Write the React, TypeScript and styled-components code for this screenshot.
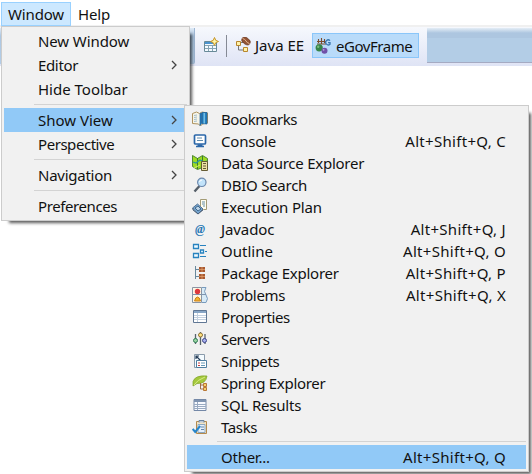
import React from "react";
import styled, { createGlobalStyle } from "styled-components";

const Global = createGlobalStyle`
  * { box-sizing: border-box; }
  body { margin: 0; background: #fff; overflow: hidden; }
`;

const Page = styled.div`
  position: relative;
  width: 532px;
  height: 474px;
  overflow: hidden;
  background: #fff;
  color: #111;
  font: 15px/22px "Noto Sans", "Open Sans", sans-serif;
  white-space: nowrap;
`;

const MenuBar = styled.nav`
  display: flex;
  height: 25px;
  padding: 2px 0 0 1px;
`;

const MenuBarItem = styled.div<{ $active?: boolean }>`
  height: 24px;
  padding: 0 6px;
  line-height: 23px;
  letter-spacing: -0.15px;
  border: 1px solid ${(p) => (p.$active ? "#99d1ff" : "transparent")};
  background: ${(p) => (p.$active ? "#cce8ff" : "transparent")};
`;

const Toolbar = styled.div`
  display: flex;
  height: 41px;
  border-top: 2px solid #f0f0f0;
  background: linear-gradient(#f6f8fd, #dfe4f5);
`;

const ToolbarEdge = styled.div`
  width: 195px;
  height: 36px;
  margin-top: 1px;
  border-right: 1px solid #9db6d3;
  border-radius: 0 0 2px 0;
  background: linear-gradient(#e0ebf6, #adc7e2 8px, #b3cde7);
`;

const Perspectives = styled.div`
  display: flex;
  align-items: center;
  width: 232px;
  height: 36px;
  padding-left: 8px;
`;

const Divider = styled.div`
  width: 1px;
  height: 22px;
  margin: 1px 8px 0 7px;
  background: #858a95;
`;

const PerspectiveButton = styled.div<{ $active?: boolean }>`
  display: flex;
  align-items: center;
  gap: ${(p) => (p.$active ? 5 : 4)}px;
  flex: none;
  width: ${(p) => (p.$active ? 107 : 77)}px;
  height: 25px;
  padding-top: ${(p) => (p.$active ? 2 : 0)}px;
  padding-left: ${(p) => (p.$active ? 2 : 0)}px;
  border: ${(p) => (p.$active ? "1px solid #8ac6fa" : "0")};
  background: ${(p) => (p.$active ? "#b9dbfa" : "transparent")};
`;

const ToolbarRest = styled.div`
  flex: 1;
  height: 35px;
  margin-top: 1px;
  border-bottom: 1px solid #a5aac2;
  background: linear-gradient(#e4edf6, #adc6e0 5px, #adc6e0 10px, #b3cde6 10px);
`;

const Menu = styled.div<{ $x: number; $y: number; $w: number }>`
  position: absolute;
  left: ${(p) => p.$x}px;
  top: ${(p) => p.$y}px;
  width: ${(p) => p.$w}px;
  padding: 2px;
  border: 1px solid #ccc;
  background: #f1f1f1;
  box-shadow: 5px 5px 3px -3px rgba(0, 0, 0, 0.65);
`;

const MenuRow = styled.div<{ $height?: number; $active?: boolean }>`
  display: flex;
  align-items: center;
  height: ${(p) => p.$height ?? 24}px;
  background: ${(p) => (p.$active ? "#91c9f7" : "transparent")};
`;

const IconCell = styled.div`
  display: flex;
  flex: none;
  width: 34px;
  padding-left: 5px;
`;

const Label = styled.span<{ $track?: number }>`
  flex: 1;
  letter-spacing: ${(p) => p.$track ?? 0}px;
`;

const Shortcut = styled.span`
  padding-right: 20px;
  letter-spacing: 0.3px;
`;

const Separator = styled.hr`
  height: 1px;
  margin: 3px 0 3px 30px;
  border: 0;
  background: #d3d3d3;
`;

const Glyph = styled.svg`
  display: block;
  flex: none;
  width: 16px;
  height: 16px;
`;

const Arrow = styled.svg`
  width: 6px;
  height: 10px;
  margin-right: 10px;
`;

const art = {
  newPerspective: (
    <>
      <path d="M1.5 4.5h12v10h-12z" fill="#f4faff" stroke="#688a98" />
      <path d="M2 5h8v2H2z" fill="#4a93d0" />
      <path d="M2 8.5h11M5.5 8v6M2 11.5h11M9.5 8v6" stroke="#86a4b5" />
      <path d="M11.5.5l1.2 2.8 2.8 1.2-2.8 1.2-1.2 2.8-1.2-2.8-2.8-1.2 2.8-1.2z" fill="#fff6a7" stroke="#c69424" />
    </>
  ),
  javaee: (
    <>
      <path d="M3.5 8v5h5M6 5.5h3" fill="none" stroke="#777" />
      <path d="M1.5 4.5h4v4h-4zM8.500 10.500h4v4h-4z" fill="#fff1a7" stroke="#b8862d" />
      <ellipse cx="11" cy="4" rx="4.700" ry="3.200" transform="rotate(35 11 4)" fill="#925334" stroke="#61301c" strokeWidth=".6" />
      <path d="M7.500 1.500q2.500.5 3.500 2.500t3.500 2.500" fill="none" stroke="#e7b893" />
    </>
  ),
  egov: (
    <>
      <path d="M2 3.500h9M3.500 1v4M6.500 0v6M9.500 1v4M2 6h9" fill="none" stroke="#7b4c2b" strokeWidth="1.100" />
      <circle cx="4.200" cy="9.800" r="3.600" fill="#368449" />
      <circle cx="3.200" cy="8.800" r="1.200" fill="#78bd7d" />
      <circle cx="9.500" cy="12.800" r="3" fill="#7050a8" />
      <circle cx="8.600" cy="11.800" r=".9" fill="#b8a7dc" />
      <path d="M15 2.600a2.500 2.500 0 1 0 0 3.600V4.700h-2" fill="none" stroke="#3976ae" strokeWidth="1.300" />
    </>
  ),
  bookmarks: (
    <>
      <path d="M.5 2.500l4-1.500 3 1.500L10 1l5.500 1v10l-5 1-2 2-2-2-6-.5z" fill="#f7f5e8" stroke="#ad925f" />
      <path d="M2 4.500l3-.5M2 6.500l3-.5M2 8.500l3-.5M2 10.500l3-.5" stroke="#8caec5" strokeWidth=".8" />
      <path d="M8 2.500v12l1.500-2V2zM10 1.500v11l5 .5V1.500z" fill="#2680bf" stroke="#175d98" strokeWidth=".7" />
      <path d="M11.500 2v10.500H13V2z" fill="#71bde5" />
    </>
  ),
  console: (
    <>
      <rect x="2.500" y="2" width="11" height="9" rx="1" fill="#fff" stroke="#2b67a9" strokeWidth="1.700" />
      <path d="M5 5h5M5 7.500h6" stroke="#618cac" />
      <path d="M5.500 12h5M4 13.500h8" stroke="#2b67a9" strokeWidth="1.500" />
    </>
  ),
  data: (
    <>
      <path d="M.5.500l5 3 5-3 5 3v11l-5-2-5 2-5-3z" fill="#9edb22" stroke="#4f8834" />
      <path d="M5.500 3v11M10.500 1v11" stroke="#397834" />
      <path d="M1 7l3 1 4-3 4 2 3-1" fill="none" stroke="#2694a1" strokeWidth="1.300" />
      <path d="M8 10l-6 3" stroke="#d5ef74" />
      <path d="M9.500 6.500h6v9h-6z" fill="#eee1a4" stroke="#665c35" />
      <path d="M11 8.500h3M11 11h3M11 13.500h3" stroke="#665c35" />
    </>
  ),
  search: (
    <>
      <path d="M7.500 9l-5 5.500" stroke="#565f69" strokeWidth="2.400" />
      <circle cx="9.800" cy="5.300" r="4.200" fill="#c2e3fa" stroke="#6b88ad" strokeWidth="1.200" />
      <path d="M7.500 5q.5-2 2.500-2" fill="none" stroke="#fff" />
    </>
  ),
  plan: (
    <>
      <path d="M8.500.500h6v10h-3l-3-3z" fill="#fffef0" stroke="#a39b75" />
      <path d="M10 3h3M10 5h3M11 7h2" stroke="#638da7" />
      <path d="M.5 9l5-4 5.500 5-5 5z" fill="#77a7d3" stroke="#55728f" />
      <path d="M3 9l3-2 3 3-3 2z" fill="#bad3e7" stroke="#41688c" />
      <path d="M1 9v2l5 4 5-4" fill="none" stroke="#4d6179" />
    </>
  ),
  javadoc: (
    <text x="8" y="11.500" textAnchor="middle" fontFamily="Liberation Serif" fontSize="12" fontWeight="700" fontStyle="italic" fill="#2878b5">@</text>
  ),
  outline: (
    <>
      <path d="M1.500 1.500h5v4h-5zM1.500 10.500h5v4h-5zM8.500 7h3v3h-3z" fill="#effaff" stroke="#2782bf" strokeWidth="1.300" />
      <path d="M8 2.500h6M13 8.500h2M8 13.500h6" stroke="#2782bf" />
    </>
  ),
  pkg: (
    <>
      <path d="M3.500 1v13M4 4.500h3M4 11.500h3" fill="none" stroke="#68889c" />
      <path d="M7 2h6v5H7zM7 9h6v5H7z" fill="#a85a32" />
      <path d="M7 4.500h6M10 2v5M7 11.500h6M10 9v5" stroke="#e7a36f" strokeWidth=".7" />
    </>
  ),
  problems: (
    <>
      <path d="M.5.500h9v15h-9z" fill="#fff6e2" stroke="#8994a3" />
      <path d="M10 .5h4q-3 4 0 7.500t0 7.500h-4" fill="#d8ebf7" stroke="#789bbd" />
      <path d="M1 7.500h13" stroke="#8094ac" />
      <circle cx="5.500" cy="4.500" r="2.700" fill="#df383b" />
      <path d="M2.500 14q1-4 3-4t3 4z" fill="#f4b42d" stroke="#ca801d" />
    </>
  ),
  properties: (
    <>
      <path d="M1.500 1.500h13v12h-13z" fill="#fff" stroke="#607794" />
      <path d="M2 2h12v2H2z" fill="#88a6c6" />
      <path d="M2 6.500h12M2 8.500h12M2 10.500h12M5.500 4v9" stroke="#c3d0df" />
    </>
  ),
  servers: (
    <>
      <path d="M3.500 3v10M8.500 1v13M13 3v10" stroke="#58646c" strokeWidth="1.300" />
      <circle cx="3.500" cy="9.500" r="2" fill="#9ad5a3" stroke="#307c53" />
      <circle cx="8.500" cy="4" r="2" fill="#ffe482" stroke="#927332" />
      <circle cx="12.500" cy="9.500" r="2" fill="#a8b1ef" stroke="#40478b" />
    </>
  ),
  snippets: (
    <>
      <path d="M2.500 1.500h10v13h-10z" fill="#f4fbff" stroke="#8a9bab" />
      <path d="M4 6V3h3M4.500 3.500l4 4" fill="none" stroke="#263d57" strokeWidth="1.200" />
      <path d="M4.500 7.500h10v7h-10z" fill="#fff" stroke="#4f7fa1" />
      <path d="M6 10h2M6 12.500h2" stroke="#c53d43" />
      <path d="M9 10h4M9 12.500h4" stroke="#6599b7" />
    </>
  ),
  spring: (
    <>
      <path d="M1 6.500Q3 0 15 1q-1 8-10 7.500L1 11z" fill="#a4c83c" stroke="#7da126" strokeWidth=".7" />
      <path d="M2 10Q5 5 13 2" fill="none" stroke="#d7eb86" />
      <path d="M8.500 8v6H11M8.500 10H11" fill="none" stroke="#a06d46" />
      <path d="M11.500 8.500h3v3h-3zM11.500 12.500h3v3h-3z" fill="#f6d16a" stroke="#b97736" />
    </>
  ),
  sql: (
    <>
      <path d="M2 2.500h12v11H2z" fill="#f8faff" stroke="#7488a7" />
      <path d="M2 3h12v2H2z" fill="#7f94b1" />
      <path d="M2 7.500h12M2 9.500h12M2 11.500h12M5.500 5v8" stroke="#9aabc2" />
    </>
  ),
  tasks: (
    <>
      <path d="M4.500 2.500h10v12h-10z" fill="#f2e4c5" stroke="#b58a4c" />
      <path d="M7 3.500V1.500h5v2" fill="#bbc9d8" stroke="#6a829d" />
      <path d="M6 5.500h7v8H6z" fill="#e4effc" stroke="#8da7be" />
      <path d="M9 8h3M9 10.500h3" stroke="#6587a8" />
      <path d="M.7 10l2.500 3 5-6" fill="none" stroke="#2686cb" strokeWidth="2" />
    </>
  ),
};

type IconName = keyof typeof art;

const Icon = ({ name }: { name: IconName }) => (
  <Glyph viewBox="0 0 16 16">{art[name]}</Glyph>
);

type Entry = { label: string; track?: number; arrow?: boolean; active?: boolean };

const windowMenu: Entry[][] = [
  [
    { label: "New Window", track: -0.1 },
    { label: "Editor", track: -0.35, arrow: true },
    { label: "Hide Toolbar" },
  ],
  [
    { label: "Show View", arrow: true, active: true },
    { label: "Perspective", track: -0.45, arrow: true },
  ],
  [{ label: "Navigation", track: -0.25, arrow: true }],
  [{ label: "Preferences", track: -0.4 }],
];

type View = { icon: IconName; label: string; track?: number; keys?: string };

const views: View[] = [
  { icon: "bookmarks", label: "Bookmarks", track: -0.4 },
  { icon: "console", label: "Console", track: -0.2, keys: "Alt+Shift+Q, C" },
  { icon: "data", label: "Data Source Explorer", track: -0.25 },
  { icon: "search", label: "DBIO Search", track: -0.25 },
  { icon: "plan", label: "Execution Plan", track: -0.15 },
  { icon: "javadoc", label: "Javadoc", track: -0.1, keys: "Alt+Shift+Q, J" },
  { icon: "outline", label: "Outline", keys: "Alt+Shift+Q, O" },
  { icon: "pkg", label: "Package Explorer", track: -0.25, keys: "Alt+Shift+Q, P" },
  { icon: "problems", label: "Problems", track: -0.35, keys: "Alt+Shift+Q, X" },
  { icon: "properties", label: "Properties", track: -0.4 },
  { icon: "servers", label: "Servers", track: -0.55 },
  { icon: "snippets", label: "Snippets", track: -0.3 },
  { icon: "spring", label: "Spring Explorer", track: -0.3 },
  { icon: "sql", label: "SQL Results", track: -0.2 },
  { icon: "tasks", label: "Tasks", track: -0.35 },
];

export default function App() {
  return (
    <Page>
      <Global />
      <MenuBar>
        <MenuBarItem $active>Window</MenuBarItem>
        <MenuBarItem>Help</MenuBarItem>
      </MenuBar>
      <Toolbar>
        <ToolbarEdge />
        <Perspectives>
          <Icon name="newPerspective" />
          <Divider />
          <PerspectiveButton>
            <Icon name="javaee" />
            <Label>Java EE</Label>
          </PerspectiveButton>
          <PerspectiveButton $active>
            <Icon name="egov" />
            <Label $track={-0.45}>eGovFrame</Label>
          </PerspectiveButton>
        </Perspectives>
        <ToolbarRest />
      </Toolbar>
      <Menu $x={1} $y={26} $w={189}>
        {windowMenu.map((group, i) => (
          <React.Fragment key={i}>
            {i > 0 && <Separator />}
            {group.map((item) => (
              <MenuRow key={item.label} $active={item.active}>
                <IconCell />
                <Label $track={item.track}>{item.label}</Label>
                {item.arrow && (
                  <Arrow viewBox="0 0 6 10">
                    <path d="M1 1l4 4-4 4" fill="none" stroke="#444" strokeWidth="1.300" />
                  </Arrow>
                )}
              </MenuRow>
            ))}
          </React.Fragment>
        ))}
      </Menu>
      <Menu $x={184} $y={105} $w={345}>
        {views.map((view) => (
          <MenuRow key={view.label} $height={22}>
            <IconCell>
              <Icon name={view.icon} />
            </IconCell>
            <Label $track={view.track}>{view.label}</Label>
            {view.keys && <Shortcut>{view.keys}</Shortcut>}
          </MenuRow>
        ))}
        <Separator />
        <MenuRow $active>
          <IconCell />
          <Label $track={-0.25}>Other...</Label>
          <Shortcut>Alt+Shift+Q, Q</Shortcut>
        </MenuRow>
      </Menu>
    </Page>
  );
}
